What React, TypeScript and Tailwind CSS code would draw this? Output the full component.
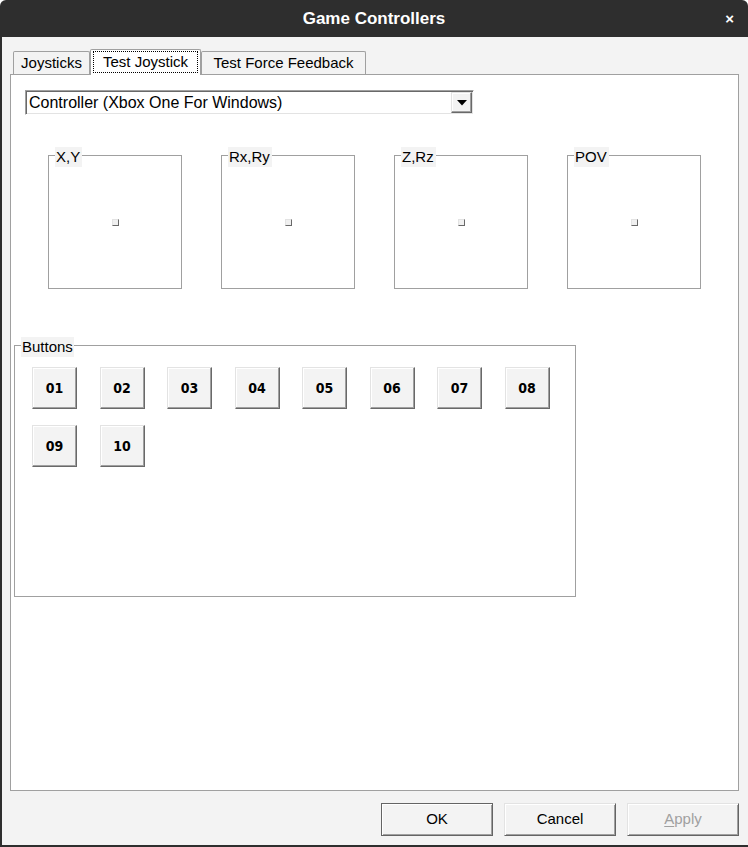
import React from 'react'

const axes = ['X,Y', 'Rx,Ry', 'Z,Rz', 'POV']
const buttons = ['01', '02', '03', '04', '05', '06', '07', '08', '09', '10']

function AxisBox({ label }: { label: string }) {
  return (
    <div className="relative w-[134px] h-[134px] border border-[#a0a0a0] bg-white flex items-center justify-center">
      <span className="absolute -top-[9px] left-[6px] h-[20px] pl-[1px] pr-[2px] bg-[#f3f3f3] text-[15px] leading-[20px] text-black">
        {label}
      </span>
      <div className="w-[7px] h-[7px] bg-[#f0f0f0] border-t border-l border-[#e3e3e3] border-r border-b border-r-[#696969] border-b-[#696969]" />
    </div>
  )
}

function JoyButton({ n }: { n: string }) {
  return (
    <div className="w-[45px] h-[42px] bg-[#f3f3f3] border-t border-l border-[#e3e3e3] border-r border-b border-r-[#696969] border-b-[#696969] shadow-[inset_-1px_-1px_0_#a0a0a0,inset_1px_1px_0_#ffffff] flex items-center justify-center font-bold text-[14px] font-['DejaVu_Sans_Condensed','Liberation_Sans_Narrow','Liberation_Sans',sans-serif] text-black">
      {n}
    </div>
  )
}

function DialogButton({ label, primary, disabled }: { label: string; primary?: boolean; disabled?: boolean }) {
  const base = 'w-[112px] h-[33px] bg-[#f3f3f3] flex items-center justify-center text-[15px]'
  if (primary) {
    return (
      <div className={`${base} border border-[#646464] shadow-[inset_1px_1px_0_#ffffff,inset_-1px_-1px_0_#a0a0a0] text-black`}>
        {label}
      </div>
    )
  }
  return (
    <div className={`${base} border-t border-l border-[#e3e3e3] border-r border-b border-r-[#646464] border-b-[#646464] shadow-[inset_1px_1px_0_#ffffff,inset_-1px_-1px_0_#a0a0a0] ${disabled ? 'text-[#a0a0a0]' : 'text-black'}`}>
      {disabled ? (
        <span>
          <span className="underline underline-offset-2">A</span>pply
        </span>
      ) : (
        label
      )}
    </div>
  )
}

export default function App() {
  return (
    <div className="w-[748px] h-[847px] flex flex-col bg-white overflow-hidden font-['Liberation_Sans',Arial,sans-serif]">
      {/* Title bar */}
      <div className="h-[37px] shrink-0 bg-[#2e2e2e] rounded-t-[6px] grid grid-cols-[1fr_auto_1fr] items-center text-white">
        <div />
        <div className="font-bold text-[17px]">Game Controllers</div>
        <div className="flex justify-end pr-[14px] text-[15px] font-bold leading-none">×</div>
      </div>

      {/* Body */}
      <div className="flex-1 flex flex-col bg-[#f3f3f3] border-l-2 border-b-2 border-[#2e2e2e] pl-[8px] pr-[9px]">
        {/* Tabs */}
        <div className="mt-[12px] h-[25px] flex items-end pl-[3px] relative z-10 text-[15px] text-black">
          <div className="w-[77px] h-[23px] border border-b-0 border-[#a0a0a0] rounded-t-[2px] bg-[#f3f3f3] flex items-center justify-center">
            Joysticks
          </div>
          <div className="w-[111px] h-[26px] -mb-px border border-b-0 border-[#a0a0a0] rounded-t-[2px] bg-white pt-[1px] px-[2px] pb-[2px]">
            <div className="h-full border border-dotted border-black flex items-center justify-center">
              Test Joystick
            </div>
          </div>
          <div className="w-[165px] h-[23px] border border-b-0 border-[#a0a0a0] rounded-t-[2px] bg-[#f3f3f3] flex items-center justify-center">
            Test Force Feedback
          </div>
        </div>

        {/* Tab panel */}
        <div className="flex-1 bg-white border border-[#a0a0a0] flex flex-col items-start">
          {/* Combo box */}
          <div className="ml-[14px] mt-[15px] w-[449px] h-[25px] flex bg-white border-t border-l border-[#a0a0a0] border-r border-b border-r-[#ffffff] border-b-[#ffffff] shadow-[inset_1px_1px_0_#696969,inset_-1px_-1px_0_#e3e3e3]">
            <div className="flex-1 flex items-center pl-[3px] text-[16px] text-black">
              Controller (Xbox One For Windows)
            </div>
            <div className="w-[21px] h-[21px] mt-[1px] mr-[1px] bg-[#f3f3f3] border-t border-l border-[#e3e3e3] border-r border-b border-r-[#696969] border-b-[#696969] shadow-[inset_-1px_-1px_0_#a0a0a0,inset_1px_1px_0_#ffffff] flex items-center justify-center">
              <svg width="10" height="6" viewBox="0 0 10 6">
                <path d="M0 0 L10 0 L5 5.5 Z" fill="#000" />
              </svg>
            </div>
          </div>

          {/* Axes */}
          <div className="ml-[37px] mt-[40px] flex gap-[39px]">
            {axes.map(a => (
              <AxisBox key={a} label={a} />
            ))}
          </div>

          {/* Buttons group */}
          <div className="relative ml-[3px] mt-[56px] w-[562px] h-[252px] border border-[#a0a0a0] pl-[17px] pt-[21px]">
            <span className="absolute -top-[9px] left-[6px] h-[20px] px-[1px] bg-[#f3f3f3] text-[15px] leading-[20px] text-black">
              Buttons
            </span>
            <div className="grid grid-cols-[repeat(8,45px)] gap-x-[22.5px] gap-y-[16px]">
              {buttons.map(b => (
                <JoyButton key={b} n={b} />
              ))}
            </div>
          </div>
        </div>

        {/* Dialog buttons */}
        <div className="mt-[12px] mb-[9px] h-[33px] flex justify-end gap-[11px]">
          <DialogButton label="OK" primary />
          <DialogButton label="Cancel" />
          <DialogButton label="Apply" disabled />
        </div>
      </div>
    </div>
  )
}
